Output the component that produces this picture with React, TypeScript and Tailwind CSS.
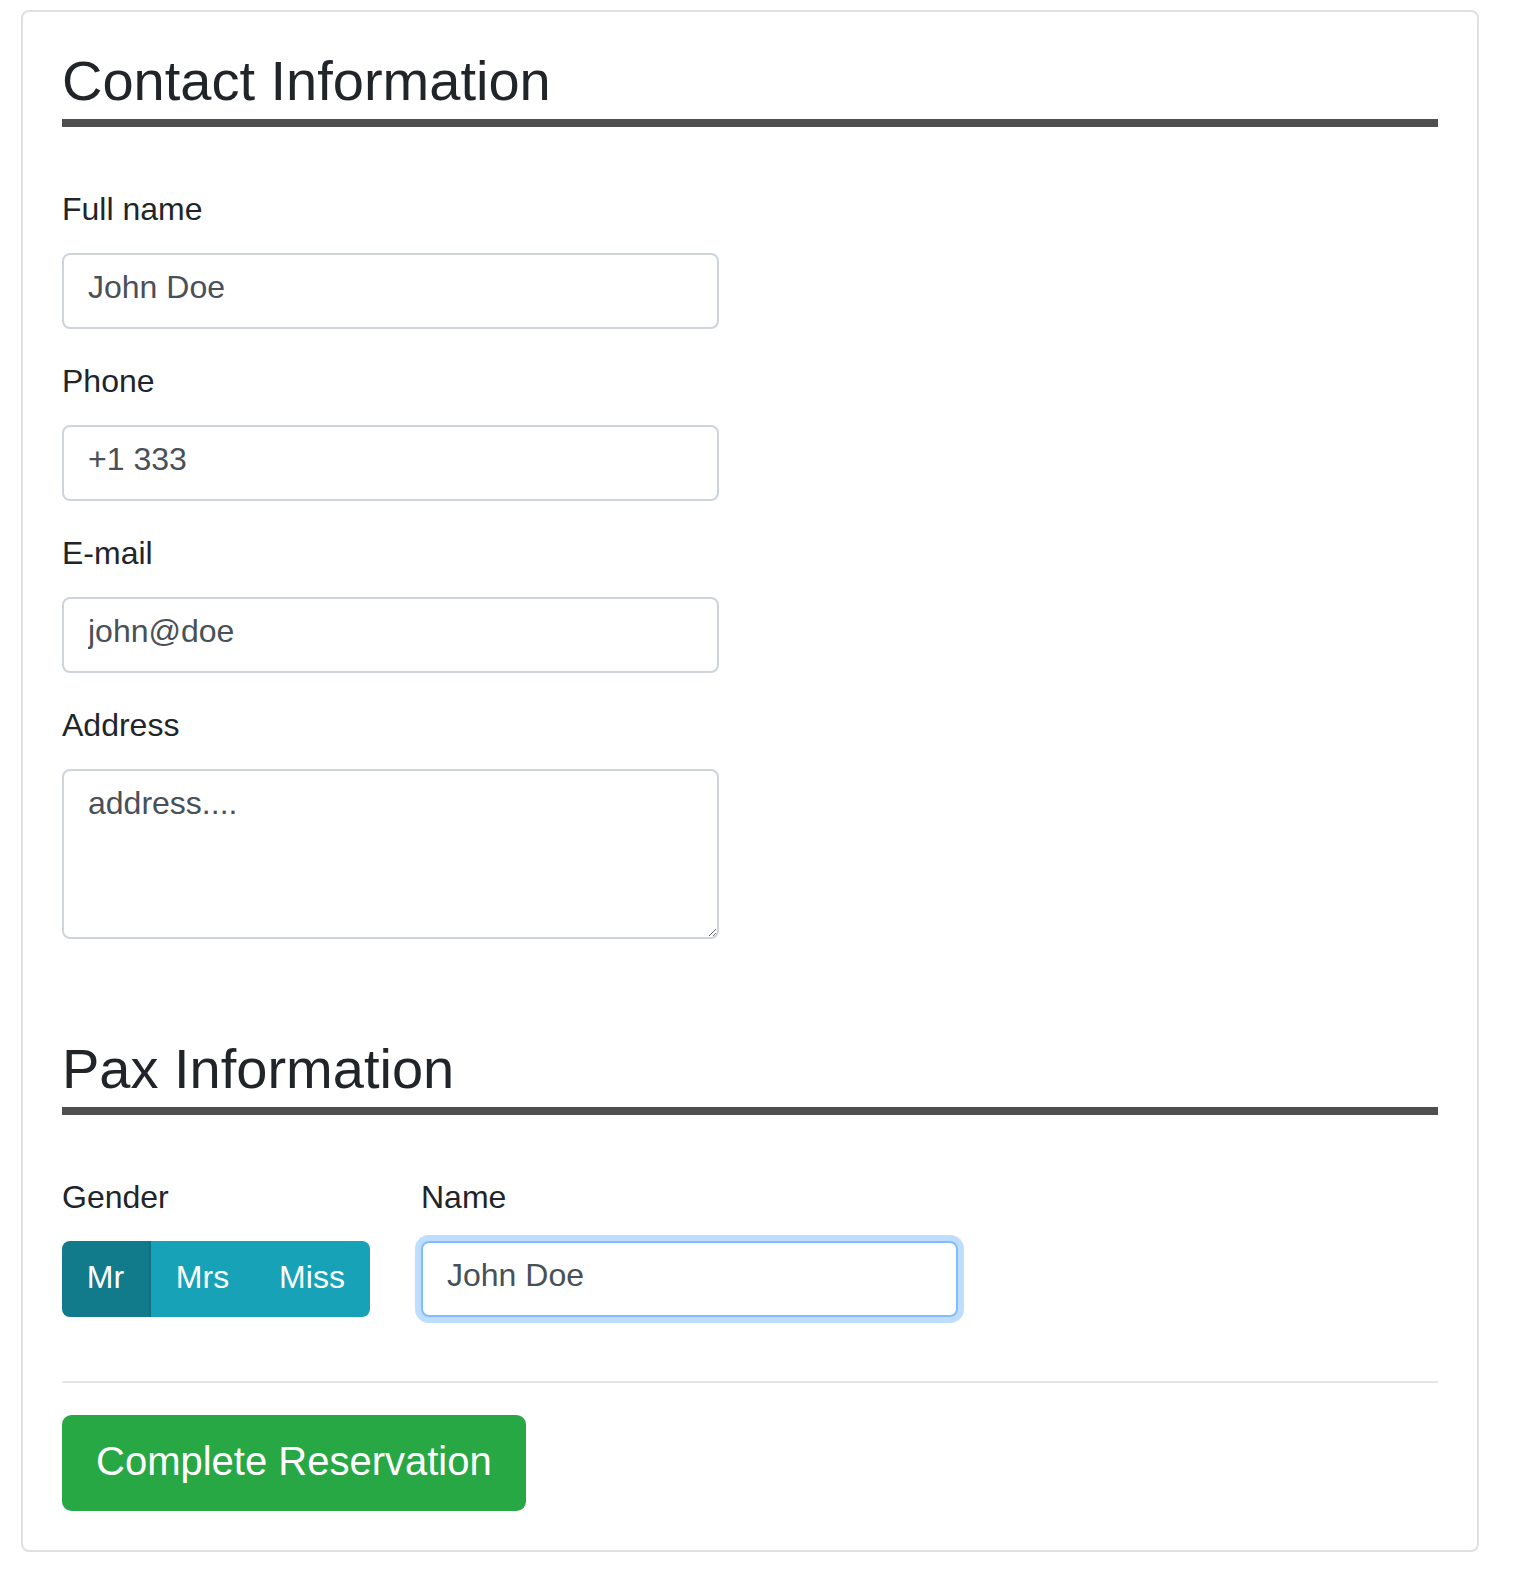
import React from "react";

const font = { fontFamily: '"Liberation Sans", Arial, Helvetica, sans-serif' };

function Field({ label, value }: { label: string; value: string }) {
  return (
    <div className="mb-[28px]">
      <label className="block text-[32px] leading-[48px] text-[#212529] mb-[20px]">{label}</label>
      <input
        defaultValue={value}
        className="block w-[657px] h-[76px] border-2 border-[#ced4da] rounded-[8px] px-[24px] pt-0 pb-[8px] text-[32px] leading-[48px] text-[#495057] bg-white outline-none"
      />
    </div>
  );
}

function Heading({ children }: { children: React.ReactNode }) {
  return (
    <h3 className="text-[56px] leading-[67px] font-normal text-[#212529] pb-[5px] border-b-[8px] border-[#4f4f4f] mb-[58px]">
      {children}
    </h3>
  );
}

export default function App() {
  return (
    <div className="bg-white w-[1518px] h-[1582px] pt-[10px] pl-[21px]" style={font}>
      <div className="w-[1458px] border-2 border-[#e0e0e0] rounded-[8px] px-[39px] pt-[35px] pb-[39px]">
        <Heading>Contact Information</Heading>
        <Field label="Full name" value="John Doe" />
        <Field label="Phone" value="+1 333" />
        <Field label="E-mail" value="john@doe" />
        <div className="mb-[96px]">
          <label className="block text-[32px] leading-[48px] text-[#212529] mb-[20px]">Address</label>
          <textarea
            defaultValue="address...."
            className="block w-[657px] h-[170px] border-2 border-[#ced4da] rounded-[8px] px-[24px] pt-[8px] pb-[12px] text-[32px] leading-[48px] text-[#495057] bg-white outline-none"
          />
        </div>
        <Heading>Pax Information</Heading>
        <div className="flex">
          <div className="w-[359px]">
            <label className="block text-[32px] leading-[48px] text-[#212529] mb-[20px]">Gender</label>
            <div className="flex w-[308px] h-[76px] rounded-[8px] overflow-hidden text-white text-[32px]">
              <div className="w-[89px] flex items-center justify-center bg-[#117a8b] border-r-2 border-[#10707f] pb-[4px]">Mr</div>
              <div className="w-[103px] flex items-center justify-center bg-[#17a2b8] pb-[4px]">Mrs</div>
              <div className="flex-1 flex items-center justify-center bg-[#17a2b8] pb-[4px]">Miss</div>
            </div>
          </div>
          <div>
            <label className="block text-[32px] leading-[48px] text-[#212529] mb-[20px]">Name</label>
            <input
              defaultValue="John Doe"
              className="block w-[537px] h-[76px] border-2 border-[#80bdff] rounded-[8px] px-[24px] pt-0 pb-[8px] text-[32px] leading-[48px] text-[#495057] bg-white outline-none shadow-[0_0_0_6px_rgba(0,123,255,0.25)]"
            />
          </div>
        </div>
        <div className="mt-[64px] h-[2px] bg-[#e5e5e5]" />
        <button className="mt-[32px] block h-[96px] px-[32px] pb-[4px] border-2 border-[#28a745] bg-[#28a745] rounded-[9.6px] text-white text-[40px] leading-[60px]">
          Complete Reservation
        </button>
      </div>
    </div>
  );
}
